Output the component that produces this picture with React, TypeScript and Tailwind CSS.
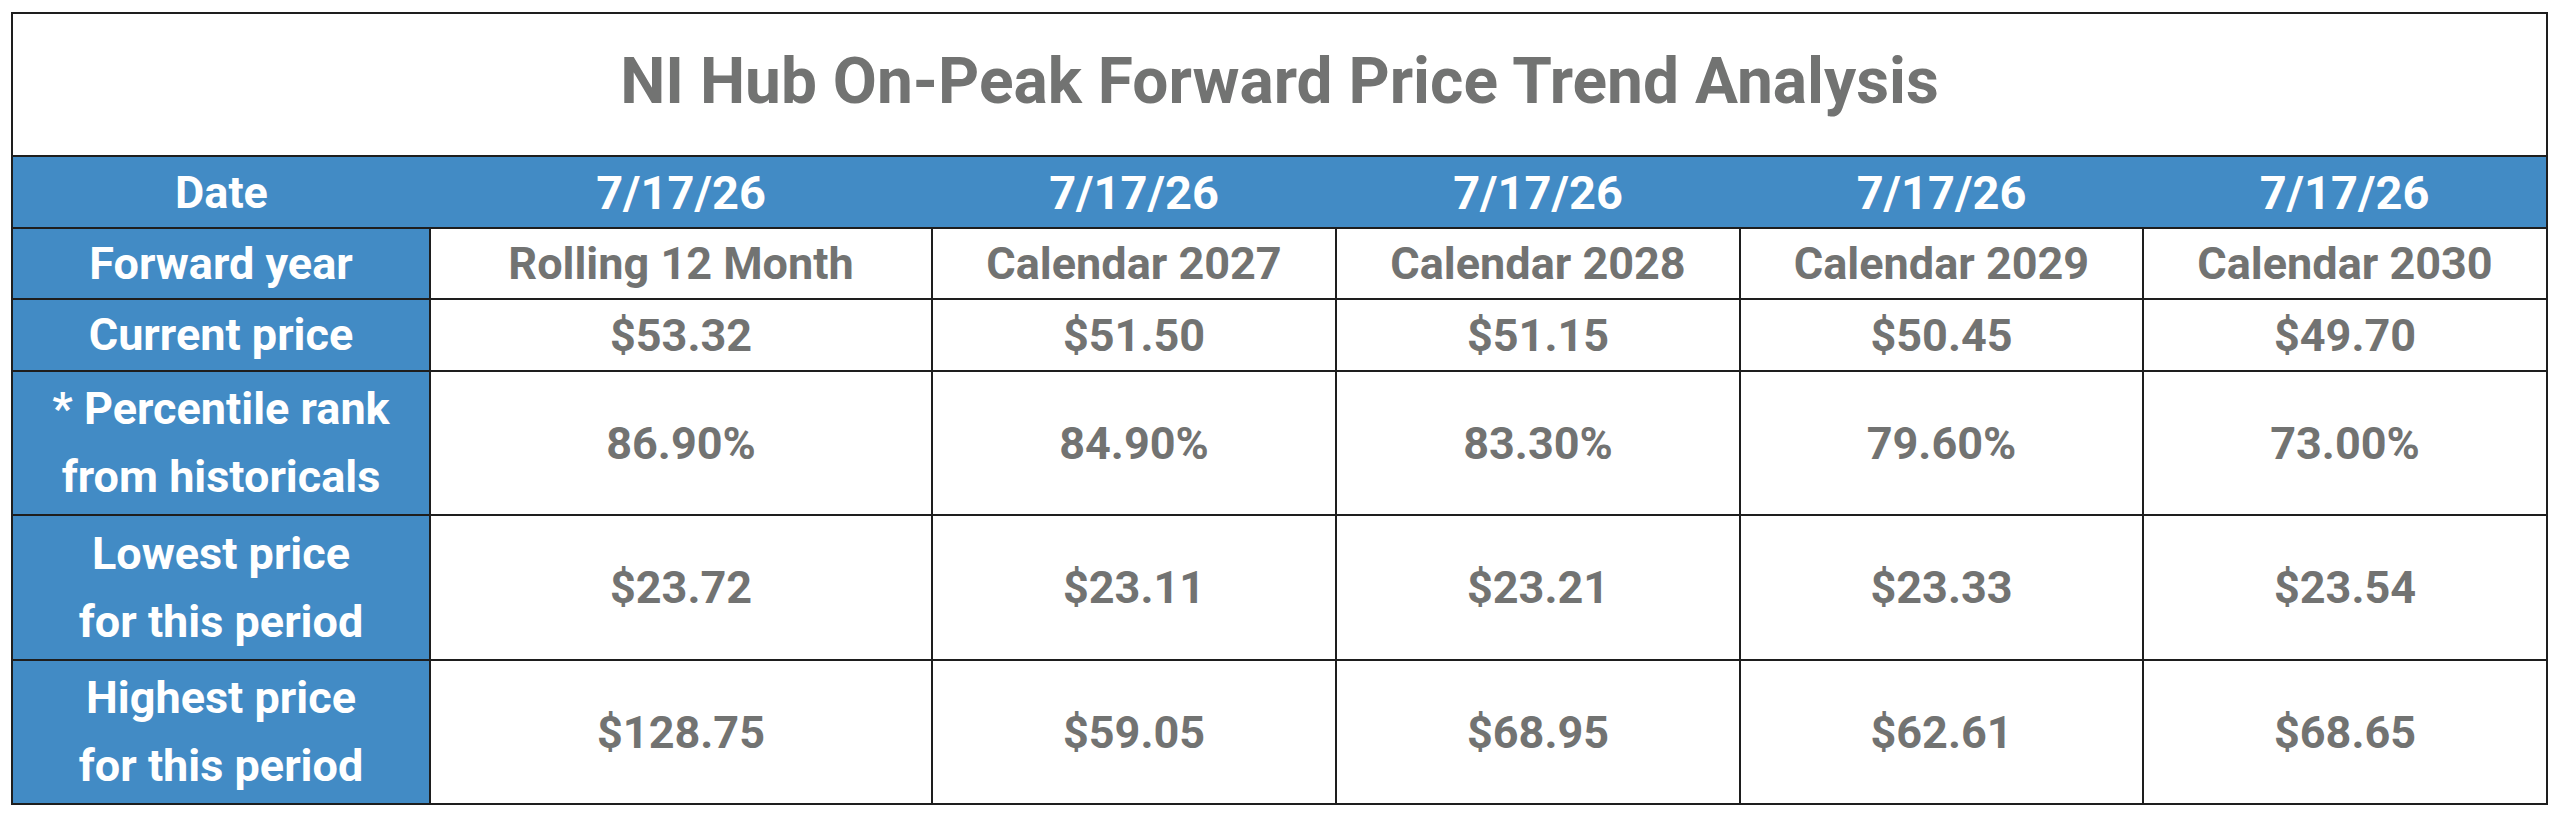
import React from 'react';

interface ForwardColumn {
  date: string;
  year: string;
  current: string;
  percentile: string;
  lowest: string;
  highest: string;
}

const columns: ForwardColumn[] = [
  { date: '7/17/26', year: 'Rolling 12 Month', current: '$53.32', percentile: '86.90%', lowest: '$23.72', highest: '$128.75' },
  { date: '7/17/26', year: 'Calendar 2027', current: '$51.50', percentile: '84.90%', lowest: '$23.11', highest: '$59.05' },
  { date: '7/17/26', year: 'Calendar 2028', current: '$51.15', percentile: '83.30%', lowest: '$23.21', highest: '$68.95' },
  { date: '7/17/26', year: 'Calendar 2029', current: '$50.45', percentile: '79.60%', lowest: '$23.33', highest: '$62.61' },
  { date: '7/17/26', year: 'Calendar 2030', current: '$49.70', percentile: '73.00%', lowest: '$23.54', highest: '$68.65' },
];

type RowKey = 'year' | 'current' | 'percentile' | 'lowest' | 'highest';

const rows: { key: RowKey; label: string[]; height: string }[] = [
  { key: 'year', label: ['Forward year'], height: 'h-[71px]' },
  { key: 'current', label: ['Current price'], height: 'h-[72px]' },
  { key: 'percentile', label: ['* Percentile rank', 'from historicals'], height: 'h-[144px]' },
  { key: 'lowest', label: ['Lowest price', 'for this period'], height: 'h-[145px]' },
  { key: 'highest', label: ['Highest price', 'for this period'], height: 'h-[144px]' },
];

const line = 'border-2 border-[#1e1e1e]';

export default function App() {
  return (
    <div className="min-h-screen bg-white pl-[11px] pt-[12px] font-[Roboto,'Liberation_Sans',sans-serif]">
      <table className="table-fixed border-collapse w-[2537px]">
        <colgroup>
          <col className="w-[418px]" />
          <col className="w-[502px]" />
          <col className="w-[404px]" />
          <col className="w-[404px]" />
          <col className="w-[403px]" />
          <col className="w-[404px]" />
        </colgroup>
        <tbody>
          {/* title */}
          <tr>
            <td colSpan={6} className={`${line} h-[143px] text-center align-middle pb-[6px] text-[64px] font-bold leading-none text-[#727372]`}>
              NI Hub On-Peak Forward Price Trend Analysis
            </td>
          </tr>

          {/* date row, one blue band */}
          <tr className="bg-[#428bc5]">
            <td className="border-y-2 border-l-2 border-[#1e1e1e] h-[72px] text-center align-middle text-[45px] font-bold leading-none text-white">
              Date
            </td>
            {columns.map((col, i) => (
              <td
                key={i}
                className={`border-y-2 border-[#1e1e1e] text-center align-middle text-[47px] font-bold leading-none text-white ${
                  i === columns.length - 1 ? 'border-r-2' : ''
                }`}
              >
                {col.date}
              </td>
            ))}
          </tr>

          {rows.map(row => (
            <tr key={row.key}>
              <td className={`${line} ${row.height} bg-[#428bc5] text-center align-middle text-[45px] font-bold leading-[68px] text-white`}>
                {row.label.map(l => (
                  <div key={l}>{l}</div>
                ))}
              </td>
              {columns.map((col, i) => (
                <td key={i} className={`${line} text-center align-middle text-[45px] font-bold leading-none text-[#727372]`}>
                  {col[row.key]}
                </td>
              ))}
            </tr>
          ))}
        </tbody>
      </table>
    </div>
  );
}
